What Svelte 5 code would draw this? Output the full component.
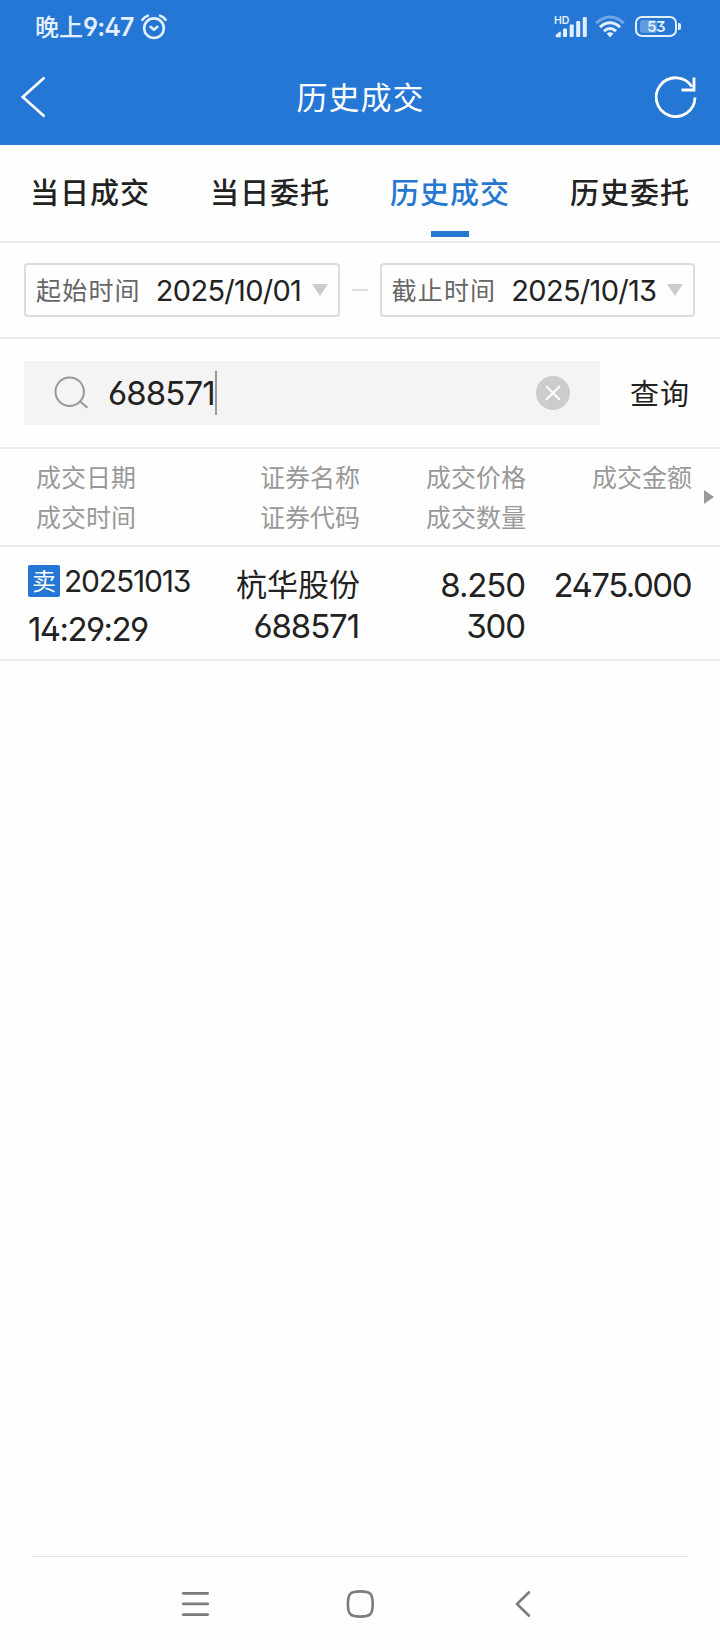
<script>
    const tabs = ['当日成交', '当日委托', '历史成交', '历史委托'];
    let activeTab = '历史成交';

    let keyword = '688571';

    const dates = [
        { label: '起始时间', value: '2025/10/01' },
        { label: '截止时间', value: '2025/10/13' }
    ];

    const columns = [
        ['成交日期', '成交时间'],
        ['证券名称', '证券代码'],
        ['成交价格', '成交数量'],
        ['成交金额', '']
    ];

    const deals = [
        {
            side: '卖',
            date: '20251013',
            time: '14:29:29',
            name: '杭华股份',
            code: '688571',
            price: '8.250',
            amount: '300',
            total: '2475.000'
        }
    ];

    const clearKeyword = () => {
        keyword = '';
    }
</script>

<div class="screen">
    <header>
        <div class="status">
            <span class="clock">晚上<b>9:47</b></span>
            <svg class="alarm" width="26" height="26" viewBox="0 0 26 26" fill="none" stroke="#e3effc" stroke-width="2.6" stroke-linecap="round" stroke-linejoin="round">
                <circle cx="13" cy="14.2" r="9.8" />
                <path d="M9.6 12.8l3.4 3 3.4-3M1.4 5.8Q3.6 2.6 6.8 1.7M24.6 5.8Q22.4 2.6 19.2 1.7" />
            </svg>
            <div class="indicators">
                <div class="signal">
                    <span class="hd">HD</span>
                    <svg width="34" height="22" viewBox="0 0 34 22" fill="#e3effc">
                        <path d="M2 21v-2l3.6-3h1v5z" stroke="#e3effc" stroke-width=".6" stroke-linejoin="round" />
                        <rect x="9" y="12.5" width="4" height="8.5" rx="1" />
                        <rect x="15.7" y="8.5" width="4" height="12.5" rx="1" />
                        <rect x="22.2" y="5" width="4" height="16" rx="1" />
                        <rect x="28.8" y="1" width="4" height="20" rx="1" />
                    </svg>
                </div>
                <svg class="wifi" width="30" height="23" viewBox="0 0 30 23" fill="none" stroke="#e3effc" stroke-width="3">
                    <path d="M1.2 8.2Q7.5 2 15 2t13.8 6.2" opacity=".4" />
                    <path d="M5 12.2Q9.5 7.8 15 7.8t10 4.4" />
                    <path d="M9 16.2Q11.8 13.4 15 13.4t6 2.8" />
                    <path d="M11.6 18.4Q15 16 18.4 18.4L15 22.4z" fill="#e3effc" stroke="none" />
                </svg>
                <div class="battery"><i></i><span>53</span></div>
            </div>
        </div>
        <div class="titlebar">
            <svg width="42" height="42" viewBox="0 0 42 42" fill="none" stroke="#fff" stroke-width="2.6">
                <path d="M23.5 1.5L1.8 21l21.7 19.5" />
            </svg>
            <h1>历史成交</h1>
            <svg width="42" height="42" viewBox="0 0 42 42" fill="none" stroke="#fff" stroke-width="2.8">
                <path d="M40 21.5A19.4 19.4 0 1 1 37 10.8" />
                <path d="M39 1.5V14H26.5" />
            </svg>
        </div>
    </header>

    <nav class="tabs">
        {#each tabs as tab}
            <button class:active={tab === activeTab} on:click={() => activeTab = tab}>{tab}</button>
        {/each}
    </nav>

    <section class="dates">
        {#each dates as date, i}
            {#if i > 0}
                <i class="dash"></i>
            {/if}
            <div class="picker">
                <span class="label">{date.label}</span>
                <span class="value num">{date.value}</span>
                <i class="caret"></i>
            </div>
        {/each}
    </section>

    <section class="search">
        <div class="field">
            <svg width="36" height="34" viewBox="0 0 36 34" fill="none" stroke="#999" stroke-width="2">
                <circle cx="15.7" cy="15.7" r="14.2" />
                <path d="M26 25.5l7.5 6.3" />
            </svg>
            <span class="keyword num">{keyword}</span>
            <i class="cursor"></i>
            <button class="clear" aria-label="清除" on:click={clearKeyword}>
                <svg width="34" height="34" viewBox="0 0 34 34" fill="none" stroke="#fff" stroke-width="1.8">
                    <circle cx="17" cy="17" r="17" fill="#ccc" stroke="none" />
                    <path d="M10 10l14 14M24 10L10 24" />
                </svg>
            </button>
        </div>
        <button class="query">查询</button>
    </section>

    <div class="row head">
        {#each columns as [first, second]}
            <div class="cell">
                <span>{first}</span>
                <span>{second}</span>
            </div>
        {/each}
        <i class="more"></i>
    </div>

    {#each deals as deal}
        <div class="row deal">
            <div class="cell when">
                <div class="day"><span class="side">{deal.side}</span><span class="date num">{deal.date}</span></div>
                <span class="time num">{deal.time}</span>
            </div>
            <div class="cell">
                <span class="name">{deal.name}</span>
                <span class="num">{deal.code}</span>
            </div>
            <div class="cell">
                <span class="num">{deal.price}</span>
                <span class="num">{deal.amount}</span>
            </div>
            <div class="cell">
                <span class="num total">{deal.total}</span>
            </div>
        </div>
    {/each}

    <footer>
        <svg width="28" height="28" viewBox="0 0 28 28" stroke="#7c7c7c" stroke-width="2.8" stroke-linecap="round">
            <path d="M1.3 3.3h24.4M1.3 13.8h24.4M1.3 24.6h24.4" />
        </svg>
        <svg width="28" height="28" viewBox="0 0 28 28" fill="none" stroke="#7c7c7c" stroke-width="2.6">
            <path d="M14.3 1.4C24.1 1.4 26.7 3.4 26.7 14S24.1 26.6 14.3 26.6 1.9 24.6 1.9 14 4.5 1.4 14.3 1.4z" />
        </svg>
        <svg width="28" height="28" viewBox="0 0 28 28" fill="none" stroke="#7c7c7c" stroke-width="2.6" stroke-linecap="round" stroke-linejoin="round">
            <path d="M19 2.3L7 14l12 11.7" />
        </svg>
    </footer>
</div>

<style>
    :global(body) {
        margin: 0;
        background: #fff;
    }

    .screen {
        display: flex;
        flex-direction: column;
        width: 720px;
        height: 1650px;
        background: #fefefe;
        color: #222;
        font-family: "Noto Sans CJK SC", sans-serif;
    }

    button {
        padding: 0;
        border: 0;
        background: none;
        color: inherit;
        font-family: inherit;
    }

    svg {
        display: block;
        flex: none;
    }

    /* Open digits and flat-top three */
    .num, .clock b, .battery span {
        font-family: Inter, sans-serif;
        font-feature-settings: "ss01", "cv09";
    }

    /* Header */
    header {
        height: 145px;
        background: #2577d5;
        color: #fff;
    }

    .status {
        display: flex;
        align-items: center;
        height: 53px;
        padding: 0 38px 0 35px;
        color: #e3effc;
    }

    .clock {
        font-size: 24px;
        font-weight: 500;
        line-height: 53px;
    }

    .clock b {
        font-size: 25px;
        font-weight: 600;
        letter-spacing: -0.9px;
    }

    .alarm {
        margin-left: 7px;
    }

    .indicators {
        display: flex;
        align-items: center;
        margin-left: auto;
    }

    .signal {
        position: relative;
    }

    .hd {
        position: absolute;
        top: 0;
        left: 0;
        font: 600 10.5px/10px Inter, sans-serif;
    }

    .wifi {
        margin: 0 10px 0 7px;
    }

    .battery {
        position: relative;
        width: 38px;
        height: 17px;
        margin-right: 5px;
        border: 2px solid #e3effc;
        border-radius: 7px;
        text-align: center;
    }

    .battery::after {
        content: "";
        position: absolute;
        top: 5px;
        right: -6px;
        width: 3px;
        height: 7px;
        border-radius: 0 2px 2px 0;
        background: #e3effc;
    }

    .battery i {
        position: absolute;
        top: 2px;
        left: 3px;
        width: 17px;
        height: 13px;
        border-radius: 3px;
        background: #5e9ce1;
    }

    .battery span {
        position: relative;
        display: block;
        font-size: 15px;
        font-weight: 600;
        letter-spacing: -0.5px;
        line-height: 17px;
    }

    .titlebar {
        display: flex;
        align-items: center;
        justify-content: space-between;
        height: 88px;
        padding: 0 23px 0 21px;
    }

    h1 {
        margin: 0;
        padding: 0 0 3px 3px;
        font-size: 31px;
        font-weight: 400;
        letter-spacing: 1px;
        line-height: 85px;
    }

    /* Tabs */
    .tabs {
        display: flex;
        height: 96px;
        border-bottom: 2px solid #ececec;
    }

    .tabs button {
        position: relative;
        flex: 1;
        padding: 0 0 3px;
        font-size: 29px;
        font-weight: 500;
        letter-spacing: 1px;
        line-height: 91px;
    }

    .tabs .active {
        color: #2577d0;
    }

    .tabs .active::after {
        content: "";
        position: absolute;
        bottom: 4px;
        left: 71px;
        width: 38px;
        height: 6px;
        background: #2577d0;
    }

    /* Date range */
    .dates {
        display: flex;
        align-items: center;
        height: 94px;
        padding: 0 25px 0 24px;
        border-bottom: 2px solid #ececec;
    }

    .picker {
        display: flex;
        flex: 1;
        align-items: center;
        height: 50px;
        padding: 0 10px;
        border: 2px solid #dcdcdc;
        border-radius: 4px;
    }

    .dash {
        width: 16px;
        height: 2px;
        margin: 0 12px;
        background: #dcdcdc;
    }

    .label {
        padding-bottom: 2px;
        color: #666;
        font-size: 25px;
        letter-spacing: 1.2px;
    }

    .value {
        margin-left: 15px;
        font-size: 29px;
        letter-spacing: -0.7px;
    }

    .caret {
        margin-left: auto;
        border: 8px solid transparent;
        border-top: 12px solid #ccc;
        border-bottom: 0;
    }

    /* Search */
    .search {
        display: flex;
        align-items: center;
        height: 108px;
        padding: 0 24px;
        border-bottom: 2px solid #ececec;
    }

    .field {
        display: flex;
        flex: none;
        align-items: center;
        width: 516px;
        height: 64px;
        padding: 0 30px 0 30px;
        margin-right: 30px;
        background: #f4f4f4;
        box-sizing: content-box;
    }

    .keyword {
        margin-left: 18px;
        font-size: 33px;
        letter-spacing: -0.9px;
    }

    .cursor {
        width: 2px;
        height: 44px;
        background: #999;
    }

    .clear {
        margin-left: auto;
    }

    .query {
        flex: none;
        padding-bottom: 3px;
        font-size: 29px;
        letter-spacing: 1px;
    }

    /* Deals table */
    .row {
        display: grid;
        grid-template-columns: 200px 160px 166px 166px;
        position: relative;
        border-bottom: 2px solid #ececec;
    }

    .cell {
        display: flex;
        flex-direction: column;
        align-items: flex-end;
    }

    .cell:first-child {
        align-items: flex-start;
    }

    .head {
        height: 96px;
        color: #999;
        font-size: 25px;
        line-height: 40px;
    }

    .head .cell {
        padding-top: 7px;
    }

    .head .cell:first-child {
        padding-left: 36px;
    }

    .more {
        position: absolute;
        top: 41px;
        left: 704px;
        border: 7px solid transparent;
        border-left: 10px solid #999;
        border-right: 0;
    }

    .deal {
        height: 112px;
        font-size: 33px;
        line-height: 41px;
    }

    .deal .cell {
        padding-top: 18px;
    }

    .deal .when {
        padding-left: 28px;
    }

    .deal .num {
        margin-right: 1px;
        letter-spacing: -1.1px;
    }

    .deal .total {
        letter-spacing: -1.5px;
    }

    .name {
        margin-bottom: 6px;
        font-size: 31px;
        line-height: 35px;
    }

    .day {
        display: flex;
        align-items: center;
        height: 32px;
    }

    .side {
        width: 32px;
        height: 32px;
        margin-right: 4px;
        border-radius: 2px;
        background: #2577d5;
        color: #fff;
        font-size: 24px;
        line-height: 29px;
        text-align: center;
    }

    .deal .date {
        font-size: 30px;
        letter-spacing: -1.2px;
    }

    .deal .time {
        margin-top: 12px;
        letter-spacing: -1.6px;
    }

    /* System navigation */
    footer {
        display: flex;
        align-items: center;
        justify-content: space-between;
        height: 94px;
        margin: auto 31px 0;
        padding: 0 151px;
        box-sizing: border-box;
        border-top: 1px solid #e2e2e2;
    }
</style>
